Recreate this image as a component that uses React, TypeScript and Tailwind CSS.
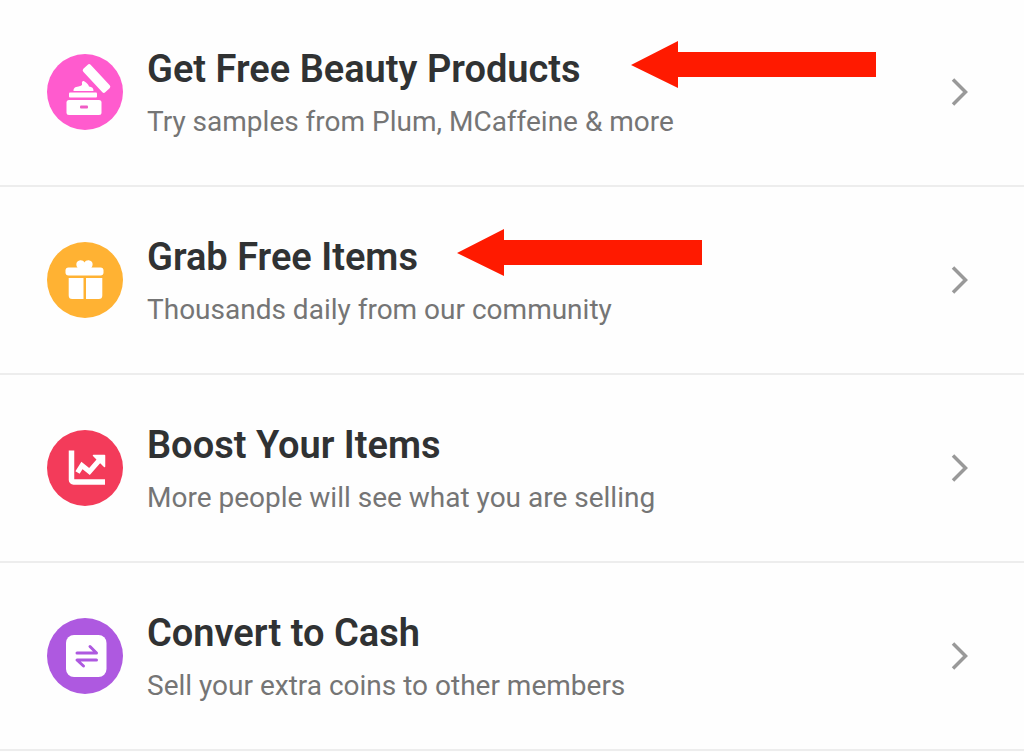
import type { ReactNode } from "react"

type Item = {
  title: string
  text: string
  color: string
  icon: ReactNode
  arrow?: string
}

const items: Item[] = [
  {
    title: "Get Free Beauty Products",
    text: "Try samples from Plum, MCaffeine & more",
    color: "bg-[#ff5bce]",
    arrow: "left-[631px] top-[42px]",
    icon: (
      <>
        <rect x="-16" y="-5" width="32" height="10" rx="2" fill="#fff" transform="translate(49.5 24.5) rotate(47)" />
        <path d="M26.5 37c0-3 1.5-4 5-4.500 2.500-.5 4-1 3.500-3-.5-2 1-3 2.500-2 2 1.500 4 2.500 4.500 5 3 .5 4.500 1.500 4.500 4.500z" fill="#fff" />
        <rect x="22" y="38.5" width="28" height="5" rx="1" fill="#fff" />
        <rect x="19.5" y="46" width="35" height="15" rx="2.5" fill="#fff" />
        <rect x="33" y="51.5" width="8" height="3" rx="1" fill="#f05cc5" />
      </>
    )
  },
  {
    title: "Grab Free Items",
    text: "Thousands daily from our community",
    color: "bg-[#ffb233]",
    arrow: "left-[457px] top-[42px]",
    icon: (
      <>
        <path d="M31.5 27c-3-3-3-7.5 1-8.500 2.500-.5 4 .5 5 2 1-1.500 2.500-2.500 5-2 4 1 4 5.500 1 8.500z" fill="#fff" />
        <rect x="18.5" y="25.5" width="38" height="8" rx="3" fill="#fff" />
        <path d="M21.700 36H36.500v21H25.200a3.500 3.500 0 0 1-3.500-3.500z" fill="#fff" />
        <path d="M39 36h16.300v17.500a3.500 3.500 0 0 1-3.500 3.500H39z" fill="#fff" />
      </>
    )
  },
  {
    title: "Boost Your Items",
    text: "More people will see what you are selling",
    color: "bg-[#f33b5a]",
    icon: (
      <>
        <path d="M24.5 20.5V50a2 2 0 0 0 2 2H58" fill="none" stroke="#fff" strokeWidth="5.5" />
        <path d="M30.5 42.5 35 35.500l7.500 6L52.500 30" fill="none" stroke="#fff" strokeWidth="5" />
        <path d="M46.500 25.500H57.500v11z" fill="#fff" stroke="#fff" strokeWidth="1.5" strokeLinejoin="round" />
      </>
    )
  },
  {
    title: "Convert to Cash",
    text: "Sell your extra coins to other members",
    color: "bg-[#ae59e0]",
    icon: (
      <>
        <rect x="19" y="17" width="40.5" height="42" rx="8" fill="#fff" />
        <path d="M30 35h19.500L43 28.500M49.500 42H30l6.500 6" fill="none" stroke="#ae59e0" strokeWidth="3" strokeLinecap="round" strokeLinejoin="round" />
      </>
    )
  }
]

function Arrow({ className }: { className: string }) {
  return (
    <svg
      className={`absolute ${className}`}
      width="246"
      height="48"
      viewBox="0 0 246 48"
      aria-hidden="true"
    >
      <path d="M0 24 47 0v11h198v25H47v11z" fill="#ff1a00" />
    </svg>
  )
}

export default function App() {

  return (

    <main className="min-h-screen overflow-hidden bg-[#fefefe] [font-family:Roboto,sans-serif]">

      <ul className="-mt-px">

        {items.map((item) => (

          <li key={item.title} className="relative border-b-2 border-[#ededed]">

            <a href="#" className="flex items-center gap-6 py-11 pl-[47px] pr-[54px]">

              {/* ICON */}

              <span className={`size-[76px] shrink-0 rounded-full ${item.color}`}>
                <svg viewBox="0 0 76 76" className="size-full" aria-hidden="true">
                  {item.icon}
                </svg>
              </span>

              {/* TEXT */}

              <span className="min-w-0 flex-1">
                <span className="block text-[38px] leading-[52px] font-semibold text-[#303233]">
                  {item.title}
                </span>
                <span className="mt-2 block text-[28px] leading-[38px] text-[#757575]">
                  {item.text}
                </span>
              </span>

              {/* CHEVRON */}

              <svg width="20" height="30" viewBox="0 0 20 30" className="shrink-0" aria-hidden="true">
                <path d="M3 2.500 15.500 15 3 27.500" fill="none" stroke="#999" strokeWidth="3.5" />
              </svg>

            </a>

            {item.arrow && <Arrow className={item.arrow} />}

          </li>

        ))}

      </ul>

    </main>

  )

}
